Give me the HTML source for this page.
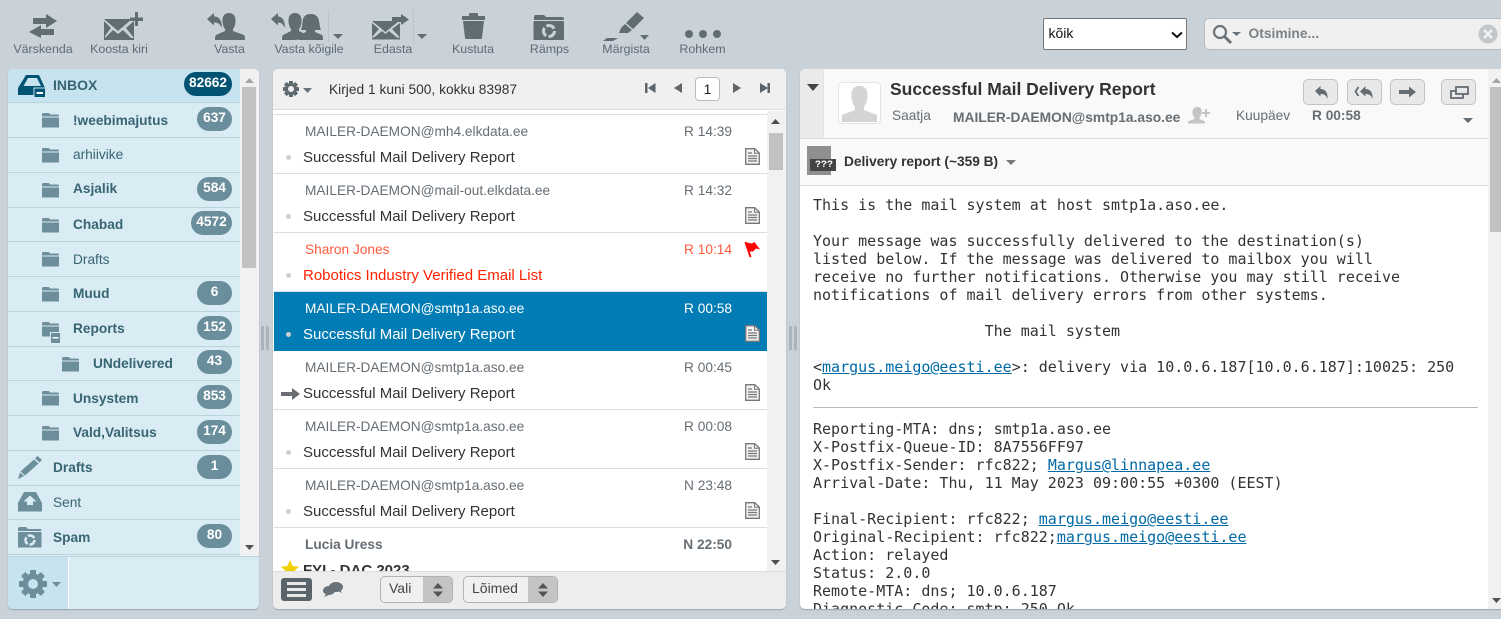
<!DOCTYPE html>
<html><head><meta charset="utf-8"><style>
html,body{margin:0;padding:0;width:1501px;height:619px;overflow:hidden;background:#c9d1d9;font-family:"Liberation Sans",sans-serif;}
*{box-sizing:border-box}
.a{position:absolute}
.tl{position:absolute;top:42px;font-size:12.4px;line-height:15px;color:#5f6a73;white-space:nowrap;transform:translateX(-50%)}
svg{position:absolute;overflow:visible}
#left{left:8px;top:69px;width:251px;height:540px;background:#d9ecf4;border-radius:5px;overflow:hidden;box-shadow:0 1px 1px #9aa5ad}
.f{position:absolute;left:0;width:232px;height:35px;border-bottom:1px solid #bbd3da;color:#376572;font-size:13.7px}
.f span.n{position:absolute;top:8px;line-height:17px;white-space:nowrap}
.f b.c{position:absolute;right:8px;top:4px;height:24px;line-height:22px;border-radius:12px;background:#6b8e9c;color:#fff;font-size:13.7px;text-align:center}
#mid{left:273px;top:69px;width:513px;height:540px;background:#fff;border-radius:5px;overflow:hidden;box-shadow:0 1px 1px #9aa5ad}
.m{position:absolute;left:1px;width:493px;height:59px;border-bottom:1px solid #dddddd;background:#fff}
.m .s{position:absolute;left:31px;top:8px;font-size:13.7px;line-height:17px;color:#666e75;white-space:nowrap}
.m .t{position:absolute;right:35px;top:8px;font-size:13.7px;line-height:17px;color:#666e75}
.m .j{position:absolute;left:29px;top:33px;font-size:15px;line-height:20px;color:#333;white-space:nowrap}
.m i{position:absolute;left:12px;top:40px;width:5px;height:5px;border-radius:50%;background:#cfcfcf}
#right{left:800px;top:69px;width:701px;height:540px;background:#fff;border-radius:5px 0 0 5px;overflow:hidden;box-shadow:0 1px 1px #9aa5ad}
pre{position:absolute;left:13px;margin:0;font-family:"DejaVu Sans Mono",monospace;font-size:15px;line-height:18px;color:#333}
pre a{color:#0069a6;text-decoration:underline}
.hb{position:absolute;top:10px;width:35px;height:26px;background:#e8e8e8;border:1px solid #c4c4c4;border-radius:5px}
.sel{position:absolute;top:507px;height:27px;border:1px solid #b2b2b2;border-radius:5px;background:#f0f0f0;font-size:14px;line-height:22px;color:#444;overflow:hidden}
</style></head><body>
<svg width="0" height="0" style="position:absolute"><defs>
<symbol id="fd" viewBox="0 0 17 16"><path d="M0 2.500 Q0 1 1.500 1H7L8 2.500H15.500Q17 2.500 17 4V15.500H0Z" fill="#6d8e9b"/><path d="M0 5H17" stroke="#d9ecf4" stroke-width="1"/></symbol>
<symbol id="doc" viewBox="0 0 15 17"><path d="M.7.7H9.7L14.3 5V16.300H.7Z" fill="#f2f2f2" stroke="#777" stroke-width="1.300"/><path d="M9.500 1V5.200H14" fill="none" stroke="#777"/><path d="M3 5H7M3 8H12M3 10.500H12M3 13H12" stroke="#777" stroke-width="1.200"/></symbol>
</defs></svg>

<!-- Toolbar -->
<svg style="left:0;top:0" width="760" height="45" fill="#626d73">
<path d="M33 18H46V14L57 21 46 28V24H33Z"/><path d="M54 29H41V25L29 32 41 38V35H54Z"/>
<path d="M104 19H132L118 31Z"/><path d="M104 21V40H134V21L126 28 134 38H131L123 30 118 34 113 30 105 38V36L111 28Z"/><path d="M135 12H138V17.500H143V21H138V26H135V21H130V17.500H135Z"/>
<path d="M207 19L214 13V16.500C219 16.500 222 20 222 28 220 24 218 22.500 214 22.500V25.500Z"/><path d="M229 13C234 13 236 17 235.500 22 235 26 234 28 233 29V31L244 35Q245 36 245 40H215Q215 36 216 35L225 31V29C224 28 223 26 222.500 22 222 17 224 13 229 13Z"/>
<path d="M271 19L278 13V16.500C282 16.500 285 20 285 28 283 24 281 22.500 278 22.500V25.500Z"/><path d="M295 13C300 13 302 17 301.500 22 301 26 300 28 299 29V31L303 33 297 40H282Q282 36 283 35L291 31V29C290 28 289 26 288.500 22 288 17 290 13 295 13Z"/><path d="M311 14C317 14 319 18 319.500 24 320 28 321 30 321 30H315V32L322 35Q323 36 323 40H298Q298 36 299 35L306 32V30H300.500C302 28 302 26 302.500 22 303 17 305 14 311 14Z"/>
<path d="M372 21H399L385.500 32Z"/><path d="M372 23V39.500H400V23L392 29 400 37.500H397L389 31 385.500 34 382 31 374 37.500H372V37L379 29Z"/><path d="M392 17H401V14L409 19.500 401 25V22H392Z"/>
<path d="M469 16V14Q469 13 470 13H477Q478 13 478 14V16H485V20H462V16Z"/><path d="M463 21H484L482 38Q482 39 480 39H467Q465 39 465 38Z"/>
<path d="M534 19V17Q534 15 536 15H544L546 17H562Q564 17 564 19V20H534Z"/><rect x="533.500" y="21" width="30.500" height="19" rx="1"/><circle cx="549" cy="31" r="5.500" fill="none" stroke="#c9d1d9" stroke-width="3" stroke-dasharray="9 2.500"/>
<path d="M637 12L644 18 633 29 626 23Z"/><path d="M625 24L632 30 628 33H619L621 28Z"/><path d="M603 41H613L618 38H607Z"/>
<circle cx="689" cy="34" r="4"/><circle cx="703" cy="34" r="4"/><circle cx="717" cy="34" r="4"/>
<path d="M333 34H343L338 39Z"/><path d="M417 34H427L422 39Z"/><path d="M640 35H649L644.500 40Z"/>
<rect x="328" y="10" width="1" height="32" fill="#bcc4ca"/><rect x="413" y="10" width="1" height="32" fill="#bcc4ca"/>
</svg>
<div class="tl" style="left:43px">Värskenda</div>
<div class="tl" style="left:119px">Koosta kiri</div>
<div class="tl" style="left:229.500px">Vasta</div>
<div class="tl" style="left:309px">Vasta kõigile</div>
<div class="tl" style="left:393px">Edasta</div>
<div class="tl" style="left:473px">Kustuta</div>
<div class="tl" style="left:549.500px">Rämps</div>
<div class="tl" style="left:626px">Märgista</div>
<div class="tl" style="left:702.500px">Rohkem</div>

<!-- Filter + search -->
<div class="a" style="left:1043px;top:18px;width:144px;height:32px;background:#fff;border:1px solid #767676;border-radius:2px;font-size:14px;line-height:28px;padding-left:4.500px;color:#111">kõik
<svg style="left:127px;top:12px" width="12" height="8"><path d="M1 1.500L6 6 11 1.500" fill="none" stroke="#111" stroke-width="2"/></svg></div>
<div class="a" style="left:1204px;top:18px;width:300px;height:32px;background:#f0f0f0;border:1px solid #b4b9bd;border-radius:5px;font-size:13.800px;font-weight:bold;line-height:29px;color:#7b8287;padding-left:43.500px">Otsimine...</div>
<svg style="left:1212px;top:24px" width="30" height="22"><circle cx="8" cy="8" r="6" fill="none" stroke="#6b7378" stroke-width="2.200"/><path d="M12 12L19 19" stroke="#6b7378" stroke-width="3"/><path d="M20 8H29L24.500 12Z" fill="#6b7378"/></svg>
<svg style="left:1479px;top:24px" width="20" height="20"><circle cx="9" cy="10" r="9.500" fill="#c4c7c9"/><path d="M5 6L13 14M13 6L5 14" stroke="#f0f0f0" stroke-width="2.500"/></svg>

<!-- Left -->
<div id="left" class="a">
<div class="f" style="top:0;height:34px;background:#c7e3ef"><span class="n" style="left:45px;font-weight:bold;font-size:14px">INBOX</span><b class="c" style="background:#005373;width:48px;top:3px">82662</b></div>
<div class="f" style="top:34px"><span class="n" style="left:65px;font-weight:bold;top:9px">!weebimajutus</span><b class="c" style="width:35px">637</b></div>
<div class="f" style="top:69px"><span class="n" style="left:65px">arhiivike</span></div>
<div class="f" style="top:104px"><span class="n" style="left:65px;font-weight:bold;top:7px">Asjalik</span><b class="c" style="width:35px">584</b></div>
<div class="f" style="top:139px;height:34px"><span class="n" style="left:65px;font-weight:bold">Chabad</span><b class="c" style="width:41px;top:3px">4572</b></div>
<div class="f" style="top:173px"><span class="n" style="left:65px;top:9px">Drafts</span></div>
<div class="f" style="top:208px"><span class="n" style="left:65px;font-weight:bold">Muud</span><b class="c" style="width:35px">6</b></div>
<div class="f" style="top:243px"><span class="n" style="left:65px;font-weight:bold">Reports</span><b class="c" style="width:35px">152</b></div>
<div class="f" style="top:278px;height:34px"><span class="n" style="left:85px;font-weight:bold">UNdelivered</span><b class="c" style="width:35px;top:3px">43</b></div>
<div class="f" style="top:312px"><span class="n" style="left:65px;font-weight:bold;top:9px">Unsystem</span><b class="c" style="width:35px">853</b></div>
<div class="f" style="top:347px"><span class="n" style="left:65px;font-weight:bold">Vald,Valitsus</span><b class="c" style="width:35px">174</b></div>
<div class="f" style="top:382px"><span class="n" style="left:45px;font-weight:bold">Drafts</span><b class="c" style="width:35px">1</b></div>
<div class="f" style="top:417px;height:34px"><span class="n" style="left:45px">Sent</span></div>
<div class="f" style="top:451px"><span class="n" style="left:45px;font-weight:bold;top:9px">Spam</span><b class="c" style="width:35px">80</b></div>
<div class="f" style="top:486px;height:3px"></div>
<svg style="left:34px;top:43px" width="17" height="16"><use href="#fd"/></svg>
<svg style="left:34px;top:78px" width="17" height="16"><use href="#fd"/></svg>
<svg style="left:34px;top:113px" width="17" height="16"><use href="#fd"/></svg>
<svg style="left:34px;top:148px" width="17" height="16"><use href="#fd"/></svg>
<svg style="left:34px;top:182px" width="17" height="16"><use href="#fd"/></svg>
<svg style="left:34px;top:217px" width="17" height="16"><use href="#fd"/></svg>
<svg style="left:34px;top:252px" width="17" height="16"><use href="#fd"/></svg>
<svg style="left:42px;top:263px" width="11" height="12"><rect x=".5" y=".5" width="10" height="11" fill="#6d8e9b" stroke="#d9ecf4"/><rect x="2.500" y="5" width="6" height="1.500" fill="#fff"/></svg>
<svg style="left:54px;top:287px" width="17" height="16"><use href="#fd"/></svg>
<svg style="left:34px;top:321px" width="17" height="16"><use href="#fd"/></svg>
<svg style="left:34px;top:356px" width="17" height="16"><use href="#fd"/></svg>
<!-- inbox icon -->
<svg style="left:10px;top:6px" width="36" height="30"><path d="M8 0H21L27 13V20H0V13Z" fill="#005373"/><path d="M10 3H19L23 11H5.500Z" fill="#c7e3ef"/><rect x="16" y="13" width="11.500" height="9.500" fill="#005373" stroke="#c7e3ef"/><rect x="18.500" y="17" width="6.500" height="2" fill="#fff"/></svg>
<!-- pencil -->
<svg style="left:10px;top:387px" width="26" height="24" fill="#6d8e9b"><path d="M19.500 0L24 4 21.500 6.500 17 2.500Z"/><path d="M16 3.500L20.500 7.500 7 19.500 2.500 15.500Z"/><path d="M2 16.500L6 20 0 23Z"/></svg>
<!-- sent -->
<svg style="left:10px;top:423px" width="24" height="20" fill="#6d8e9b"><path fill-rule="evenodd" d="M6 0H18L24 11V19.500H0V11ZM12 3.500L5.500 9.500H9V13H15V9.500H18.500Z"/></svg>
<!-- spam -->
<svg style="left:9px;top:457px" width="25" height="22" fill="#6d8e9b"><path d="M1 3Q1 1 3 1H9L11 3H23Q24.500 3 24.500 5H1Z"/><rect x="1" y="6" width="23.500" height="15.500"/><circle cx="13" cy="14" r="4.500" fill="none" stroke="#d9ecf4" stroke-width="2.500" stroke-dasharray="7.500 1.900"/></svg>
<!-- scrollbar -->
<div class="a" style="left:232px;top:0;width:19px;height:487px;background:#f1f1f1"></div>
<div class="a" style="left:234px;top:18px;width:14px;height:181px;background:#c1c1c1"></div>
<svg style="left:237px;top:9px" width="9" height="5" fill="#a5a5a5"><path d="M0 5H9L4.500 0Z"/></svg>
<svg style="left:237px;top:476px" width="9" height="5" fill="#505050"><path d="M0 0H9L4.500 5Z"/></svg>
<!-- footer -->
<div class="a" style="left:0;top:487px;width:251px;height:54px;background:#d9ecf4;border-top:1px solid #bbd3da"></div>
<div class="a" style="left:0;top:488px;width:61px;height:53px;background:#c7e3ef;border-right:1px solid #fff"></div>
<svg style="left:11px;top:501px" width="28" height="28"><g fill="#6d8e9b"><circle cx="14" cy="14" r="10.500"/><rect x="11" y="0" width="6" height="28" rx="1"/><rect x="11" y="0" width="6" height="28" rx="1" transform="rotate(45 14 14)"/><rect x="11" y="0" width="6" height="28" rx="1" transform="rotate(90 14 14)"/><rect x="11" y="0" width="6" height="28" rx="1" transform="rotate(135 14 14)"/></g><circle cx="14" cy="14" r="5" fill="#c7e3ef"/></svg>
<svg style="left:44px;top:513px" width="9" height="5" fill="#6d8e9b"><path d="M0 0H9L4.500 5Z"/></svg>
</div>

<!-- splitters -->
<div class="a" style="left:261px;top:326px;width:3px;height:24px;background:#abb4bb"></div>
<div class="a" style="left:266px;top:326px;width:3px;height:24px;background:#abb4bb"></div>
<div class="a" style="left:789px;top:326px;width:3px;height:24px;background:#abb4bb"></div>
<div class="a" style="left:794px;top:326px;width:3px;height:24px;background:#abb4bb"></div>

<!-- Middle -->
<div id="mid" class="a">
<div class="a" style="left:0;top:0;width:513px;height:41px;background:#f0f0f0;border-bottom:1px solid #dcdcdc"></div>
<div class="a" style="left:1px;top:41px;width:493px;height:5px;background:#fff;border-bottom:1px solid #dddddd"></div>
<svg style="left:10px;top:12px" width="16" height="16"><g fill="#5f6a70"><rect x="6" y="0" width="4" height="16" rx=".5"/><rect x="6" y="0" width="4" height="16" rx=".5" transform="rotate(45 8 8)"/><rect x="6" y="0" width="4" height="16" rx=".5" transform="rotate(90 8 8)"/><rect x="6" y="0" width="4" height="16" rx=".5" transform="rotate(135 8 8)"/><circle cx="8" cy="8" r="6"/></g><circle cx="8" cy="8" r="3" fill="#f0f0f0"/></svg>
<svg style="left:30px;top:19px" width="9" height="5" fill="#6a7277"><path d="M0 0H9L4.500 5Z"/></svg>
<div class="a" style="left:56px;top:12px;font-size:13.750px;line-height:17px;color:#333;white-space:nowrap">Kirjed 1 kuni 500, kokku 83987</div>
<svg style="left:372px;top:13px" width="130" height="13" fill="#5c666c">
<rect x="0" y="1" width="2.500" height="10"/><path d="M10.500 1V11L3 6Z"/>
<path d="M37 1V11L29 6Z"/>
<path d="M88 1V11L96 6Z"/>
<path d="M115 1V11L123 6Z"/><rect x="122.500" y="1" width="2.500" height="10"/>
</svg>
<div class="a" style="left:422px;top:8px;width:25px;height:24px;background:#fff;border:1px solid #bbb;border-radius:4px;text-align:center;font-size:14px;line-height:22px;color:#222">1</div>

<div class="m" style="top:46px"><div class="s">MAILER-DAEMON@mh4.elkdata.ee</div><div class="t">R 14:39</div><i></i><div class="j">Successful Mail Delivery Report</div><svg style="left:471px;top:33px" width="15" height="17"><use href="#doc"/></svg></div>
<div class="m" style="top:105px"><div class="s">MAILER-DAEMON@mail-out.elkdata.ee</div><div class="t">R 14:32</div><i></i><div class="j">Successful Mail Delivery Report</div><svg style="left:471px;top:33px" width="15" height="17"><use href="#doc"/></svg></div>
<div class="m" style="top:164px"><div class="s" style="color:#ff5a3c">Sharon Jones</div><div class="t" style="color:#ff5a3c">R 10:14</div><i></i><div class="j" style="color:#ff2200">Robotics Industry Verified Email List</div><svg style="left:470px;top:8px" width="17" height="17"><path d="M1.500 1L6.500 16" fill="none" stroke="#ff0000" stroke-width="2"/><path d="M2 1.500L8 2.500 10.500 1 16 8.500 12 7.500 9 10.500 5 10.500Z" fill="#ff0000"/></svg></div>
<div class="m" style="top:223px;background:#017cb4;border-bottom-color:#017cb4"><div class="s" style="color:#fff">MAILER-DAEMON@smtp1a.aso.ee</div><div class="t" style="color:#fff">R 00:58</div><i></i><div class="j" style="color:#fff">Successful Mail Delivery Report</div><svg style="left:471px;top:33px" width="15" height="17"><use href="#doc"/></svg></div>
<div class="m" style="top:282px"><div class="s">MAILER-DAEMON@smtp1a.aso.ee</div><div class="t">R 00:45</div><div class="j">Successful Mail Delivery Report</div><svg style="left:7px;top:36px" width="19" height="14" fill="#6a6e72"><path d="M0 5H11V1L19 7 11 13V9H0Z"/></svg><svg style="left:471px;top:33px" width="15" height="17"><use href="#doc"/></svg></div>
<div class="m" style="top:341px"><div class="s">MAILER-DAEMON@smtp1a.aso.ee</div><div class="t">R 00:08</div><i></i><div class="j">Successful Mail Delivery Report</div><svg style="left:471px;top:33px" width="15" height="17"><use href="#doc"/></svg></div>
<div class="m" style="top:400px"><div class="s">MAILER-DAEMON@smtp1a.aso.ee</div><div class="t">N 23:48</div><i></i><div class="j">Successful Mail Delivery Report</div><svg style="left:471px;top:33px" width="15" height="17"><use href="#doc"/></svg></div>
<div class="m" style="top:459px;height:44px;border:0;overflow:hidden"><div class="s" style="font-weight:bold">Lucia Uress</div><div class="t" style="font-weight:bold">N 22:50</div><div class="j" style="font-weight:bold">FYI - DAC 2023</div><svg style="left:7px;top:32px" width="18" height="17" fill="#f0d000"><path d="M9 0L11.700 6 18 6.700 13.300 11 14.600 17 9 14 3.400 17 4.700 11 0 6.700 6.300 6Z"/></svg></div>

<!-- scrollbar -->
<div class="a" style="left:494px;top:42px;width:19px;height:460px;background:#f1f1f1"></div>
<div class="a" style="left:496px;top:64px;width:14px;height:37px;background:#c1c1c1"></div>
<svg style="left:498px;top:50px" width="9" height="5" fill="#505050"><path d="M0 5H9L4.500 0Z"/></svg>
<svg style="left:498px;top:491px" width="9" height="5" fill="#505050"><path d="M0 0H9L4.500 5Z"/></svg>
<!-- footer -->
<div class="a" style="left:0;top:502px;width:513px;height:38px;background:#ededed;border-top:1px solid #dcdcdc"></div>
<div class="a" style="left:8px;top:509px;width:31px;height:23px;background:#5a656b;border-radius:3px"></div>
<div class="a" style="left:14px;top:513px;width:19px;height:3px;background:#e8e8e8"></div>
<div class="a" style="left:14px;top:519px;width:19px;height:3px;background:#e8e8e8"></div>
<div class="a" style="left:14px;top:525px;width:19px;height:3px;background:#e8e8e8"></div>
<svg style="left:50px;top:513px" width="20" height="15" fill="#687278"><ellipse cx="13" cy="5" rx="7" ry="5"/><path d="M15 9L19 11 17 7Z"/><ellipse cx="6" cy="8.500" rx="6" ry="4.500"/><path d="M3 12L1 15 7 12.500Z"/></svg>
<div class="sel" style="left:107px;width:73px;padding-left:8px">Vali<div class="a" style="left:42px;top:0;width:30px;height:25px;background:#c4c4c4"></div><svg style="left:51px;top:5.500px" width="12" height="14" fill="#555"><path d="M1 5.500H11L6 0ZM1 8.500H11L6 14Z"/></svg></div>
<div class="sel" style="left:190px;width:95px;padding-left:8px">Lõimed<div class="a" style="left:64px;top:0;width:30px;height:25px;background:#c4c4c4"></div><svg style="left:73px;top:5.500px" width="12" height="14" fill="#555"><path d="M1 5.500H11L6 0ZM1 8.500H11L6 14Z"/></svg></div>
</div>

<!-- Right -->
<div id="right" class="a">
<div class="a" style="left:0;top:0;width:688px;height:70px;background:#f9f9f9;border-bottom:1px solid #dddddd"></div>
<div class="a" style="left:0;top:0;width:24px;height:69px;background:#eaeaea;border-right:1px solid #e2e2e2"></div>
<svg style="left:7px;top:15px" width="12" height="7" fill="#444"><path d="M0 0H12L6 7Z"/></svg>
<div class="a" style="left:38px;top:13px;width:43px;height:42px;background:#fff;border:1px solid #e4e4e4;border-radius:4px"></div>
<svg style="left:40px;top:16px" width="39" height="37" fill="#d4d4d4"><path d="M19.500 1C26 1 28 6 27.500 12 27 17 25.500 20 24 22V25L37 30V37H2V30L15 25V22C13.500 20 12 17 11.500 12 11 6 13 1 19.500 1Z"/></svg>
<div class="a" style="left:90px;top:9px;font-size:17.500px;font-weight:bold;line-height:22px;color:#333;white-space:nowrap">Successful Mail Delivery Report</div>
<div class="a" style="left:92px;top:39px;font-size:13.700px;line-height:16px;color:#666e75">Saatja</div>
<div class="a" style="left:153px;top:41px;font-size:13.800px;font-weight:bold;line-height:16px;color:#666e75;white-space:nowrap">MAILER-DAEMON@smtp1a.aso.ee</div>
<svg style="left:388px;top:37.500px" width="22" height="16" fill="#c4c4c4"><path d="M9.500 0C13 0 14 3 13.500 6 13 8.500 12.500 9.500 11.500 10.500V12L17 14.500V16.500H0V14.500L6.500 12V10.500C5.500 9.500 5 8.500 4.500 6 4 3 6 0 9.500 0Z"/><path d="M17 2H19V5H22V7H19V10H17V7H14V5H17Z"/></svg>
<div class="a" style="left:436px;top:39px;font-size:13.700px;line-height:16px;color:#666e75">Kuupäev</div>
<div class="a" style="left:512px;top:38.500px;font-size:13.700px;font-weight:bold;line-height:16px;color:#666e75">R 00:58</div>
<div class="hb" style="left:503px"></div><div class="hb" style="left:547px"></div><div class="hb" style="left:590px"></div><div class="hb" style="left:641px"></div>
<svg style="left:503px;top:10px" width="180" height="26" fill="#646c72">
<path d="M12 12L17.500 7V10C22 10 25 13 24.500 20 23 16 21 15 17.500 15V17.500Z"/>
<path d="M55.500 8L52.500 12.500 55.500 17" fill="none" stroke="#646c72" stroke-width="1.800"/><path d="M57 12.500L62.500 7V10C67 10 70 13 69.500 20 68 16 66 15 62.500 15V17.500Z"/>
<path d="M96 11H106V7.500L113 13 106 18.500V15H96Z"/>
<rect x="148" y="12" width="12" height="7" fill="none" stroke="#646c72" stroke-width="1.800"/><rect x="153" y="8" width="12" height="7" fill="#e8e8e8" stroke="#646c72" stroke-width="1.800"/>
</svg>
<svg style="left:663px;top:49px" width="10" height="5" fill="#646c72"><path d="M0 0H10L5 5Z"/></svg>

<div class="a" style="left:0;top:70px;width:688px;height:47px;background:#f9f9f9;border-bottom:1px solid #dddddd"></div>
<svg style="left:7px;top:77px" width="29" height="29"><rect x="0" y="0" width="24" height="29" fill="#8f8f8f"/><rect x="3" y="13" width="26" height="12" fill="#444"/></svg>
<div class="a" style="left:15px;top:90px;font:bold 10px/14px 'Liberation Mono',monospace;color:#fff">???</div>
<div class="a" style="left:44px;top:85px;font-size:13.700px;font-weight:bold;line-height:16px;color:#333;white-space:nowrap">Delivery report (~359 B)</div>
<svg style="left:206px;top:91px" width="10" height="5" fill="#777"><path d="M0 0H10L5 5Z"/></svg>

<pre style="top:127px">This is the mail system at host smtp1a.aso.ee.

Your message was successfully delivered to the destination(s)
listed below. If the message was delivered to mailbox you will
receive no further notifications. Otherwise you may still receive
notifications of mail delivery errors from other systems.

                   The mail system

&lt;<a>margus.meigo@eesti.ee</a>&gt;: delivery via 10.0.6.187[10.0.6.187]:10025: 250
Ok</pre>
<div class="a" style="left:13px;top:338px;width:665px;height:1px;background:#bbb"></div>
<pre style="top:351px">Reporting-MTA: dns; smtp1a.aso.ee
X-Postfix-Queue-ID: 8A7556FF97
X-Postfix-Sender: rfc822; <a>Margus@linnapea.ee</a>
Arrival-Date: Thu, 11 May 2023 09:00:55 +0300 (EEST)

Final-Recipient: rfc822; <a>margus.meigo@eesti.ee</a>
Original-Recipient: rfc822;<a>margus.meigo@eesti.ee</a>
Action: relayed
Status: 2.0.0
Remote-MTA: dns; 10.0.6.187
Diagnostic-Code: smtp; 250 Ok</pre>
<div class="a" style="left:688px;top:0;width:13px;height:541px;background:#f1f1f1"></div>
<div class="a" style="left:690px;top:18px;width:11px;height:145px;background:#c1c1c1"></div>
<svg style="left:692px;top:9px" width="9" height="5" fill="#a5a5a5"><path d="M0 5H9L4.500 0Z"/></svg>
<svg style="left:692px;top:529px" width="9" height="5" fill="#505050"><path d="M0 0H9L4.500 5Z"/></svg>
</div>
</body></html>
